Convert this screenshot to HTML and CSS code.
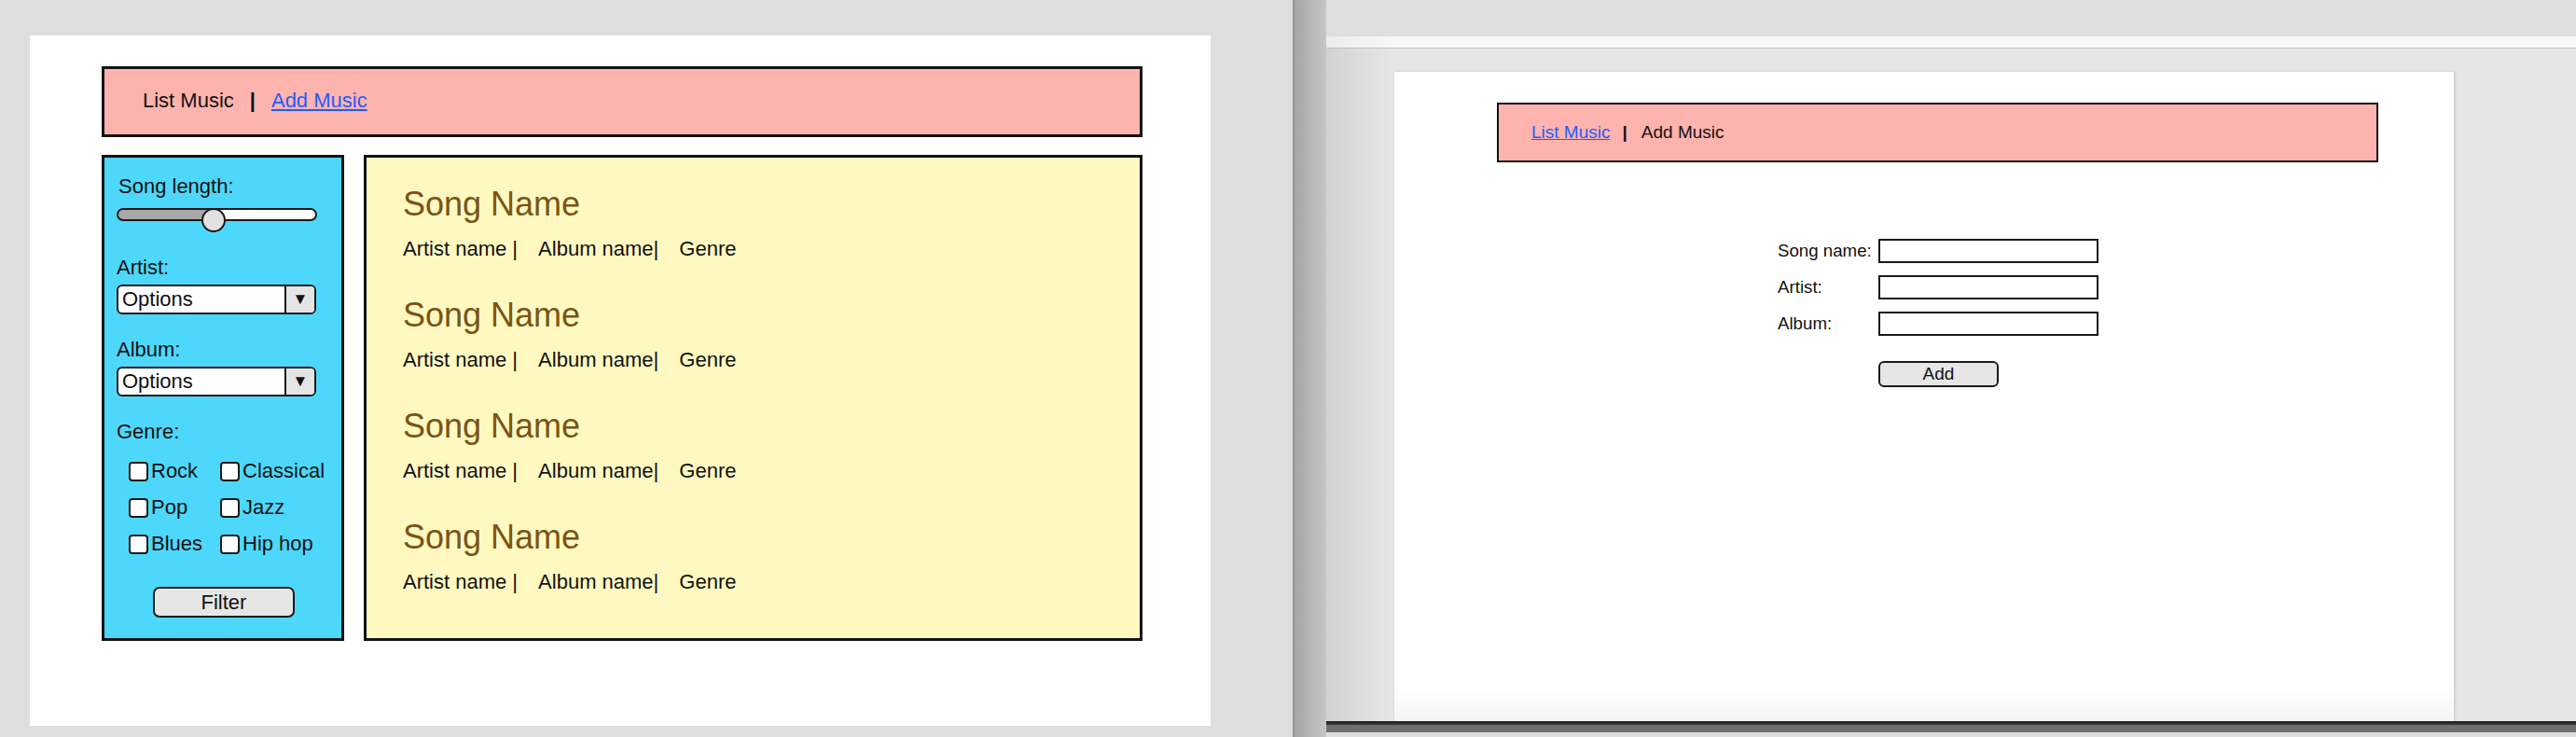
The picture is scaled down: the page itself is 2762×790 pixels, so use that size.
FILE: index.html
```html
<!DOCTYPE html>
<html lang="en">
<head>
    <meta charset="UTF-8">
    <meta name="viewport" content="width=device-width, initial-scale=1.0">
    <title>Music</title>
    <link rel="stylesheet" href="styles.css">
</head>
<body>
<div class="desk">

    <!-- List Music mockup -->
    <div class="mock">
        <div class="nav">
            <span>List Music</span>
            <span class="sep">|</span>
            <a href="#">Add Music</a>
        </div>

        <div class="main-row">
            <div class="filters">
                <div class="label label-first">Song length:</div>
                <div class="slider">
                    <div class="track"></div>
                    <div class="thumb"></div>
                </div>

                <div class="label">Artist:</div>
                <div class="select">
                    <span class="select-text">Options</span>
                    <span class="arrow">&#9660;</span>
                </div>

                <div class="label">Album:</div>
                <div class="select">
                    <span class="select-text">Options</span>
                    <span class="arrow">&#9660;</span>
                </div>

                <div class="label">Genre:</div>
                <div class="genres">
                    <div class="check"><span class="box"></span>Rock</div>
                    <div class="check"><span class="box"></span>Classical</div>
                    <div class="check"><span class="box"></span>Pop</div>
                    <div class="check"><span class="box"></span>Jazz</div>
                    <div class="check"><span class="box"></span>Blues</div>
                    <div class="check"><span class="box"></span>Hip hop</div>
                </div>

                <div class="btn btn-filter">Filter</div>
            </div>

            <div class="songs">
                <div class="song">
                    <h2>Song Name</h2>
                    <p class="meta"><span>Artist name |</span><span>Album name|</span><span>Genre</span></p>
                </div>
                <div class="song">
                    <h2>Song Name</h2>
                    <p class="meta"><span>Artist name |</span><span>Album name|</span><span>Genre</span></p>
                </div>
                <div class="song">
                    <h2>Song Name</h2>
                    <p class="meta"><span>Artist name |</span><span>Album name|</span><span>Genre</span></p>
                </div>
                <div class="song">
                    <h2>Song Name</h2>
                    <p class="meta"><span>Artist name |</span><span>Album name|</span><span>Genre</span></p>
                </div>
            </div>
        </div>
    </div>

    <div class="gutter"></div>
    <div class="split"></div>

    <!-- Add Music mockup, inside the editor window -->
    <div class="app">
        <div class="app-top"></div>
        <div class="app-strip"></div>
        <div class="app-body">
            <div class="page">
                <div class="nav nav-small">
                    <a href="#">List Music</a>
                    <span class="sep">|</span>
                    <span>Add Music</span>
                </div>

                <div class="add-form">
                    <span>Song name:</span>
                    <span class="field"></span>
                    <span>Artist:</span>
                    <span class="field"></span>
                    <span>Album:</span>
                    <span class="field"></span>
                    <span></span>
                    <div class="btn btn-add">Add</div>
                </div>
            </div>
        </div>
        <div class="app-bar"></div>
        <div class="app-foot"></div>
    </div>

</div>
</body>
</html>
```

FILE: styles.css
```css
body {
    margin: 0;
    font-family: "Liberation Sans", Arial, sans-serif;
    background-color: #dedede;
    color: #111;
}
.desk {
    display: flex;
    width: 2762px;
    height: 790px;
}

/* left mockup */
.mock {
    box-sizing: border-box;
    width: 1266px;
    height: 740px;
    margin: 38px 0 0 32px;
    padding: 33px 73px 0 77px;
    background-color: #fff;
}
.nav {
    box-sizing: border-box;
    display: flex;
    align-items: center;
    height: 76px;
    padding: 0 0 2px 41px;
    border: 3px solid #141414;
    background-color: #ffb3ae;
    font-size: 22px;
}
.nav a {
    color: #1f5cff;
}
.nav .sep {
    font-weight: bold;
    margin: 0 17px;
}
.main-row {
    display: flex;
    gap: 21px;
    height: 521px;
    margin-top: 19px;
}

/* sidebar */
.filters {
    box-sizing: border-box;
    width: 260px;
    padding: 0 27px 0 13px;
    border: 3px solid #141414;
    background-color: #4dd8fb;
    font-size: 22px;
    line-height: 26px;
}
.label {
    margin: 25px 0 5px 0;
}
.label-first {
    margin: 18px 0 0 2px;
}
.slider {
    position: relative;
    width: 215px;
    height: 26px;
    margin: 10px 0 0 0;
}
.track {
    box-sizing: border-box;
    height: 14px;
    margin-top: 6px;
    border: 2px solid #1a1a1a;
    border-radius: 7px;
    background: linear-gradient(to right, #a8a8a8 0, #a8a8a8 48%, #fff 48%);
}
.thumb {
    position: absolute;
    top: 0;
    left: 91px;
    box-sizing: border-box;
    width: 26px;
    height: 26px;
    border: 2px solid #1a1a1a;
    border-radius: 50%;
    background-color: #e2e2e2;
}
.select {
    box-sizing: border-box;
    display: flex;
    width: 214px;
    height: 32px;
    border: 2px solid #1a1a1a;
    border-radius: 6px;
    background-color: #fff;
    overflow: hidden;
}
.select-text {
    flex: 1;
    padding-left: 4px;
    line-height: 28px;
}
.arrow {
    display: flex;
    align-items: center;
    justify-content: center;
    width: 30px;
    border-left: 2px solid #1a1a1a;
    background-color: #e4e4e4;
    font-size: 17px;
}
.genres {
    display: grid;
    grid-template-columns: 98px auto;
    row-gap: 13px;
    margin: 16px 0 0 13px;
    white-space: nowrap;
}
.check {
    display: flex;
    align-items: center;
    gap: 3px;
    height: 26px;
}
.box {
    box-sizing: border-box;
    width: 21px;
    height: 21px;
    border: 2px solid #1a1a1a;
    border-radius: 4px;
    background-color: #fff;
}
.btn {
    box-sizing: border-box;
    border: 2px solid #1a1a1a;
    border-radius: 7px;
    background-color: #e6e6e6;
    text-align: center;
}
.btn-filter {
    width: 152px;
    height: 33px;
    margin: 33px 0 0 39px;
    line-height: 29px;
}

/* song list */
.songs {
    flex: 1;
    padding: 29px 0 0 39px;
    border: 3px solid #141414;
    background-color: #fff9c1;
}
.song h2 {
    margin: 0;
    font-size: 36px;
    font-weight: normal;
    line-height: 42px;
    color: #7b5315;
}
.meta {
    display: flex;
    gap: 22px;
    margin: 14px 0 37px 0;
    font-size: 22px;
    line-height: 26px;
}

/* right window */
.gutter {
    width: 88px;
}
.split {
    width: 36px;
    background: linear-gradient(to right, #8c8c8c 0, #a6a6a6 3px, #c6c6c6 100%);
}
.app {
    flex: 1;
    display: flex;
    flex-direction: column;
}
.app-top {
    height: 39px;
}
.app-strip {
    height: 12px;
    border-bottom: 1px solid #c4c4c4;
    background: linear-gradient(to right, #ececec, #f8f8f8 80px);
}
.app-body {
    flex: 1;
    padding: 25px 0 0 73px;
    background: linear-gradient(to right, #d2d2d2, #e6e6e6 70px);
}
.page {
    box-sizing: border-box;
    width: 1136px;
    height: 696px;
    padding: 33px 81px 0 110px;
    background: linear-gradient(#fff 0, #fff 95%, #f4f4f4 100%);
    box-shadow: 1px 0 3px rgba(0, 0, 0, 0.15);
}
.nav-small {
    height: 64px;
    padding: 0 0 0 35px;
    border-width: 2px;
    font-size: 19px;
}
.nav-small .sep {
    margin: 0 15px 0 13px;
}
.add-form {
    display: grid;
    grid-template-columns: 108px 236px;
    row-gap: 13px;
    align-items: center;
    margin: 82px 0 0 301px;
    font-size: 18.7px;
}
.field {
    box-sizing: border-box;
    height: 26px;
    border: 2px solid #1a1a1a;
    background-color: #fff;
}
.btn-add {
    width: 129px;
    height: 28px;
    margin-top: 14px;
    border-radius: 6px;
    line-height: 24px;
    font-size: 19px;
}
.app-bar {
    height: 12px;
    background: linear-gradient(#1c1c1c 0, #3c3c3c 4px, #6e6e6e 4px, #727272 100%);
}
.app-foot {
    height: 5px;
}
```
